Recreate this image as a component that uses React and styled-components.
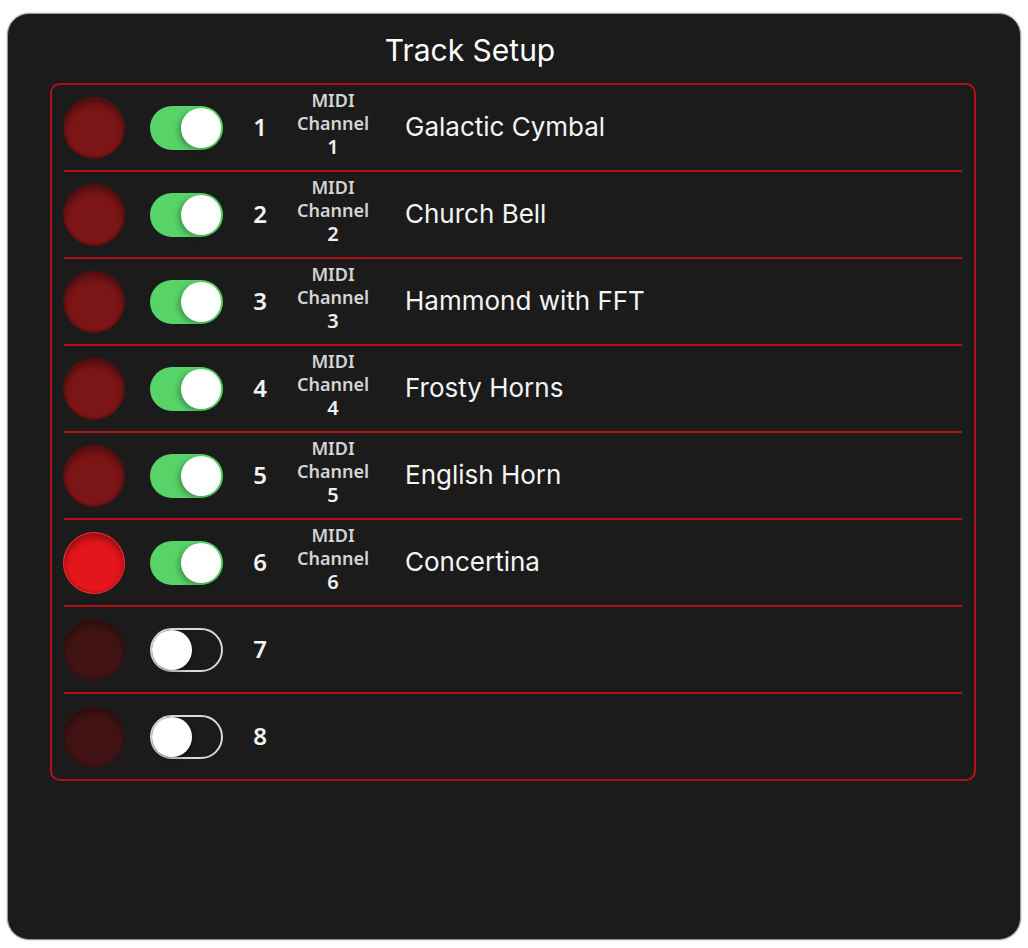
import styled, { createGlobalStyle, css } from "styled-components";

const GlobalStyle = createGlobalStyle`
  html, body {
    margin: 0;
    padding: 0;
    background: #ffffff;
  }
  body {
    font-family: Inter, "Liberation Sans", sans-serif;
  }
`;

const Page = styled.div`
  padding: 13px 7px 8px 7px;
`;

const Panel = styled.div`
  height: 927px;
  box-sizing: border-box;
  background: #1b1b1b;
  border: 1px solid #9a9a9a;
  border-radius: 22px;
  box-shadow: 0 0 0 1px #e6e6e6;
  display: flex;
  flex-direction: column;
  padding: 0 44px 0 42px;
`;

const Title = styled.div`
  height: 69px;
  display: flex;
  align-items: center;
  justify-content: center;
  padding-right: 86px;
  padding-top: 3px;
  box-sizing: border-box;
  color: #ffffff;
  font-size: 30px;
  font-family: Inter, "Liberation Sans", sans-serif;
`;

const List = styled.div`
  border: 2px solid #b01217;
  border-radius: 10px;
  padding: 0 12px;
  display: flex;
  flex-direction: column;
`;

const Row = styled.div`
  height: 85px;
  display: flex;
  align-items: center;
  border-bottom: 2px solid #b01217;
  &:last-child {
    border-bottom: none;
  }
`;

const ledColors = {
  on: { bg: "#7b1516", rim: "#5c0c0d" },
  active: { bg: "#e4161c", rim: "#ff2a2e" },
  off: { bg: "#421314", rim: "#331010" },
};

const Led = styled.div`
  width: 60px;
  height: 60px;
  flex: none;
  border-radius: 50%;
  background: ${(p) => ledColors[p.$state].bg};
  border: 1px solid ${(p) => ledColors[p.$state].rim};
  box-shadow: inset 0 5px 6px rgba(0, 0, 0, 0.35),
    inset 0 -1px 2px rgba(0, 0, 0, 0.2);
  margin-left: -1px;
`;

const Toggle = styled.div`
  width: 73px;
  height: 44px;
  flex: none;
  margin-left: 25px;
  border-radius: 22px;
  box-sizing: border-box;
  position: relative;
  ${(p) =>
    p.$on
      ? css`
          background: #57d368;
        `
      : css`
          background: transparent;
          border: 2px solid #d9d9d9;
        `}
`;

const Knob = styled.div`
  position: absolute;
  top: ${(p) => (p.$on ? "2px" : "0px")};
  ${(p) => (p.$on ? "right: 2px;" : "left: 0px;")}
  width: 40px;
  height: 40px;
  border-radius: 50%;
  background: #ffffff;
  box-shadow: ${(p) =>
    p.$on ? "-3px 2px 5px rgba(0,0,0,0.25)" : "1px 2px 4px rgba(0,0,0,0.3)"};
`;

const Num = styled.div`
  width: 74px;
  flex: none;
  text-align: center;
  color: #f2f2f2;
  font-family: "Noto Sans", "DejaVu Sans", sans-serif;
  font-weight: 600;
  font-size: 24px;
  margin-top: -3px;
`;

const Midi = styled.div`
  width: 72px;
  flex: none;
  display: flex;
  flex-direction: column;
  align-items: center;
  color: #d4d4d4;
  font-family: "Noto Sans", "DejaVu Sans", sans-serif;
  font-weight: 600;
  font-size: 18px;
  line-height: 23px;
  margin-top: -8px;
`;

const MidiNum = styled.span`
  color: #f0f0f0;
  font-size: 20px;
`;

const Name = styled.div`
  margin-left: 36px;
  color: #f4f4f4;
  font-size: 26px;
  font-family: Inter, "Liberation Sans", sans-serif;
  margin-top: -2px;
`;

const tracks = [
  { n: 1, name: "Galactic Cymbal", led: "on" },
  { n: 2, name: "Church Bell", led: "on" },
  { n: 3, name: "Hammond with FFT", led: "on" },
  { n: 4, name: "Frosty Horns", led: "on" },
  { n: 5, name: "English Horn", led: "on" },
  { n: 6, name: "Concertina", led: "active" },
  { n: 7, name: null, led: "off" },
  { n: 8, name: null, led: "off" },
];

export default function App() {
  return (
    <Page>
      <GlobalStyle />
      <Panel>
        <Title>Track Setup</Title>
        <List>
          {tracks.map((t) => {
            const on = t.name !== null;
            return (
              <Row key={t.n}>
                <Led $state={t.led} />
                <Toggle $on={on}>
                  <Knob $on={on} />
                </Toggle>
                <Num>{t.n}</Num>
                {on && (
                  <>
                    <Midi>
                      <span>MIDI</span>
                      <span>Channel</span>
                      <MidiNum>{t.n}</MidiNum>
                    </Midi>
                    <Name>{t.name}</Name>
                  </>
                )}
              </Row>
            );
          })}
        </List>
      </Panel>
    </Page>
  );
}
